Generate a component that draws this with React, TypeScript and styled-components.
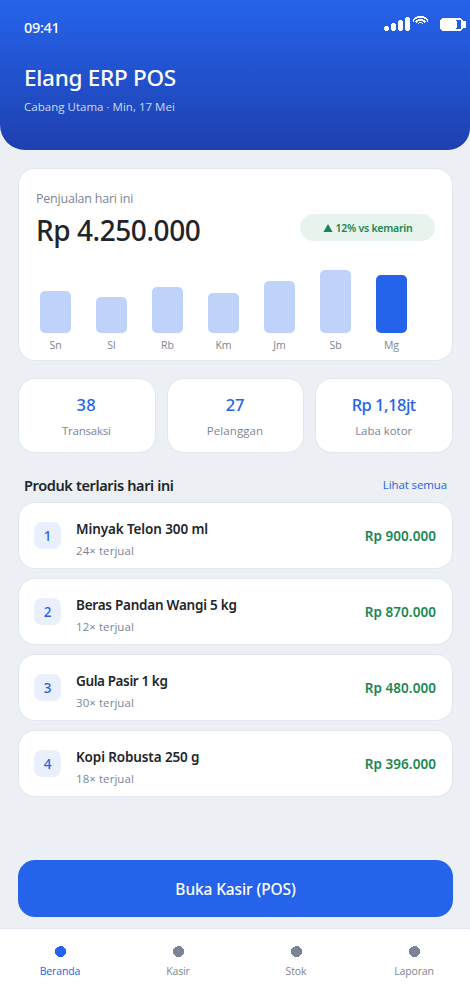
import React from "react";
import styled, { createGlobalStyle } from "styled-components";

const color = {
  page: "#eceff4",
  ink: "#212529",
  muted: "#7c8594",
  blue: "#2563eb",
  blueSoft: "#bfd3fa",
  blueTint: "#eaeffd",
  green: "#198754",
  greenTint: "#e7f4ed",
  line: "#e2e6ee",
};

const GlobalStyle = createGlobalStyle`
  *, *::before, *::after { box-sizing: border-box; }
  body {
    margin: 0;
    background: ${color.page};
    color: ${color.ink};
    font-family: "Noto Sans", "Open Sans", sans-serif;
  }
  h1, h2, p { margin: 0; }
  button { border: 0; padding: 0; font: inherit; cursor: pointer; }
`;

type Tracked = { $track?: number };

const Screen = styled.div`
  display: flex;
  flex-direction: column;
  width: 470px;
  height: 992px;
  overflow: hidden;
  background: ${color.page};
`;

const Header = styled.header`
  flex: none;
  height: 150px;
  padding-top: 17px;
  color: #fff;
  background: linear-gradient(180deg, #2563eb 0%, #1e40af 100%);
  border-radius: 0 0 22px 25px;
`;

const StatusBar = styled.div`
  display: flex;
  justify-content: space-between;
  align-items: flex-start;
  height: 46px;
  padding: 0 4px 0 24px;
`;

const Clock = styled.span`
  font-size: 14.5px;
  font-weight: 500;
  line-height: 20px;
  letter-spacing: -0.35px;
`;

const StatusIcons = styled.svg`
  display: block;
  width: 82px;
  height: 16px;
  margin-top: -1px;
`;

const AppTitle = styled.h1`
  padding-left: 24px;
  font-size: 22.5px;
  font-weight: 500;
  line-height: 30px;
  letter-spacing: -0.27px;
`;

const Branch = styled.p`
  margin-top: 6px;
  padding-left: 24px;
  font-family: "Open Sans", sans-serif;
  font-size: 11.5px;
  line-height: 16px;
  letter-spacing: 0.02px;
  color: #cbdafb;
`;

const Content = styled.main`
  flex: 1;
  display: flex;
  flex-direction: column;
  padding: 18px 17px 11px 18px;
`;

const Card = styled.section`
  background: #fff;
  border: 1px solid ${color.line};
  border-radius: 17px;
`;

const SalesCard = styled(Card)`
  height: 193px;
  padding: 21px 17px 0;
`;

const SalesLabel = styled.p`
  font-family: "Open Sans", sans-serif;
  font-size: 12.5px;
  line-height: 18px;
  letter-spacing: -0.22px;
  color: ${color.muted};
`;

const SalesRow = styled.div`
  display: flex;
  justify-content: space-between;
  align-items: flex-start;
  height: 57px;
  padding-top: 4px;
`;

const SalesTotal = styled.strong`
  font-size: 28px;
  font-weight: 500;
  line-height: 36px;
  letter-spacing: -0.45px;
`;

const Trend = styled.span`
  display: flex;
  align-items: center;
  justify-content: center;
  gap: 3px;
  width: 135px;
  height: 27px;
  margin-top: 2px;
  border-radius: 14px;
  background: ${color.greenTint};
  color: ${color.green};
  font-size: 10.5px;
  font-weight: 600;
  line-height: 16px;
  letter-spacing: -0.25px;
`;

const TrendArrow = styled.svg`
  width: 10px;
  height: 8px;
  fill: currentColor;
`;

const Chart = styled.div`
  display: flex;
  align-items: flex-end;
  gap: 25px;
  height: 87px;
  padding-left: 4px;
`;

const Day = styled.div`
  display: flex;
  flex-direction: column;
  align-items: center;
  width: 31px;
`;

const Bar = styled.div<{ $height: number; $active: boolean }>`
  width: 31px;
  height: ${(p) => p.$height}px;
  border-radius: 5px;
  background: ${(p) => (p.$active ? color.blue : color.blueSoft)};
`;

const DayName = styled.span`
  margin-top: 5px;
  font-family: "Open Sans", sans-serif;
  font-size: 10.5px;
  line-height: 14px;
  color: ${color.muted};
`;

const Stats = styled.div`
  display: grid;
  grid-template-columns: repeat(3, 1fr);
  gap: 11px;
  margin-top: 17px;
`;

const StatCard = styled(Card)`
  display: flex;
  flex-direction: column;
  align-items: center;
  height: 75px;
  padding: 15px 1px 0 0;
`;

const StatValue = styled.strong<Tracked>`
  font-size: 16.5px;
  font-weight: 500;
  line-height: 22px;
  letter-spacing: ${(p) => p.$track ?? 0}px;
  color: ${color.blue};
`;

const StatLabel = styled.span<Tracked>`
  margin-top: 7px;
  font-family: "Open Sans", sans-serif;
  font-size: 11.5px;
  line-height: 16px;
  letter-spacing: ${(p) => p.$track ?? 0}px;
  color: ${color.muted};
`;

const SectionHead = styled.div`
  display: flex;
  justify-content: space-between;
  align-items: flex-start;
  height: 49px;
  padding: 22px 6px 0 6px;
`;

const SectionTitle = styled.h2`
  font-size: 14.5px;
  font-weight: 600;
  line-height: 20px;
  letter-spacing: -0.37px;
`;

const SeeAll = styled.button`
  margin-top: 2px;
  background: none;
  color: ${color.blue};
  font-family: "Open Sans", sans-serif;
  font-size: 11.5px;
  line-height: 16px;
  letter-spacing: -0.12px;
`;

const ProductList = styled.div`
  display: flex;
  flex-direction: column;
  gap: 9px;
`;

const ProductRow = styled(Card)`
  display: flex;
  align-items: center;
  height: 67px;
  padding: 0 16px 0 15px;
`;

const Rank = styled.span`
  display: flex;
  align-items: center;
  justify-content: center;
  width: 27px;
  height: 27px;
  border-radius: 8px;
  background: ${color.blueTint};
  color: ${color.blue};
  font-size: 13.5px;
  font-weight: 500;
  line-height: 18px;
`;

const ProductInfo = styled.div`
  flex: 1;
  display: flex;
  flex-direction: column;
  align-items: flex-start;
  gap: 5px;
  padding: 7px 0 0 15px;
`;

const ProductName = styled.span<Tracked>`
  font-size: 13.5px;
  font-weight: 600;
  line-height: 18px;
  letter-spacing: ${(p) => p.$track ?? 0}px;
`;

const Sold = styled.span`
  font-family: "Open Sans", sans-serif;
  font-size: 11.5px;
  line-height: 16px;
  letter-spacing: 0.06px;
  color: ${color.muted};
`;

const Price = styled.span`
  color: ${color.green};
  font-size: 13.5px;
  font-weight: 600;
  line-height: 18px;
  letter-spacing: 0.06px;
`;

const OpenRegister = styled.button`
  height: 57px;
  margin-top: auto;
  border-radius: 17px;
  background: ${color.blue};
  color: #fff;
  font-size: 15.5px;
  font-weight: 500;
  line-height: 20px;
  letter-spacing: -0.12px;
`;

const TabBar = styled.nav`
  flex: none;
  display: grid;
  grid-template-columns: repeat(4, 118px);
  height: 64px;
  padding-left: 1px;
  background: #fff;
  border-top: 1px solid ${color.line};
`;

const Tab = styled.button<{ $active: boolean }>`
  display: flex;
  flex-direction: column;
  align-items: center;
  padding-top: 17px;
  background: none;
  color: ${(p) => (p.$active ? color.blue : color.muted)};
`;

const TabDot = styled.svg`
  display: block;
  width: 11px;
  height: 11px;
  margin-left: 1px;
  fill: currentColor;
`;

const TabLabel = styled.span`
  margin-top: 7px;
  font-family: "Open Sans", sans-serif;
  font-size: 10.5px;
  line-height: 14px;
  letter-spacing: -0.13px;
`;

const days = [
  { name: "Sn", height: 42 },
  { name: "Sl", height: 36 },
  { name: "Rb", height: 46 },
  { name: "Km", height: 40 },
  { name: "Jm", height: 52 },
  { name: "Sb", height: 63 },
  { name: "Mg", height: 58 },
];

const stats = [
  { value: "38", label: "Transaksi", valueTrack: 0.4, labelTrack: -0.22 },
  { value: "27", label: "Pelanggan", valueTrack: -0.2, labelTrack: 0.1 },
  { value: "Rp 1,18jt", label: "Laba kotor", valueTrack: -0.5, labelTrack: -0.05 },
];

const products = [
  { name: "Minyak Telon 300 ml", sold: 24, price: "Rp 900.000", track: -0.11 },
  { name: "Beras Pandan Wangi 5 kg", sold: 12, price: "Rp 870.000", track: -0.24 },
  { name: "Gula Pasir 1 kg", sold: 30, price: "Rp 480.000", track: -0.39 },
  { name: "Kopi Robusta 250 g", sold: 18, price: "Rp 396.000", track: -0.12 },
];

const tabs = ["Beranda", "Kasir", "Stok", "Laporan"];

function DeviceStatus() {
  return (
    <StatusIcons viewBox="384 16 82 16" fill="#fff" shapeRendering="crispEdges">
      <path d="M385 26h3v1h1v3h-1v1h-3v-1h-1v-3h1z" />
      <path d="M392 23h3v1h1v6h-1v1h-3v-1h-1v-6h1z" />
      <path d="M399 20h3v1h1v9h-1v1h-3v-1h-1v-9h1z" />
      <path d="M406 17h3v1h1v12h-1v1h-3v-1h-1v-12h1z" />
      <path d="M417 16h7v1h2v1h1v1h1v3h-1v-2h-1v-1h-2v-1h-7v1h-2v1h-1v2h-1v-3h1v-1h1v-1h2z" />
      <path d="M418 19h5v1h2v1h1v1h-1v1h-1v-1h-1v-1h-5v1h-1v1h-1v-1h-1v-1h1v-1h2z" />
      <path d="M419 22h3v1h1v1h-1v-1h-3v1h-1v-1h1z" />
      <path
        fillRule="evenodd"
        d="M442 18h19v1h1v1h1v1h3v7h-3v1h-1v1h-1v1h-19v-1h-1v-1h-1v-9h1v-1h1zM456 20v1h1v7h-1v1h5v-9z"
      />
    </StatusIcons>
  );
}

export default function App() {
  return (
    <>
      <GlobalStyle />
      <Screen>
        <Header>
          <StatusBar>
            <Clock>09:41</Clock>
            <DeviceStatus />
          </StatusBar>
          <AppTitle>Elang ERP POS</AppTitle>
          <Branch>Cabang Utama · Min, 17 Mei</Branch>
        </Header>

        <Content>
          <SalesCard>
            <SalesLabel>Penjualan hari ini</SalesLabel>
            <SalesRow>
              <SalesTotal>Rp 4.250.000</SalesTotal>
              <Trend>
                <TrendArrow viewBox="0 0 10 8">
                  <path d="M5 0l4.6 8H.4z" />
                </TrendArrow>
                12% vs kemarin
              </Trend>
            </SalesRow>
            <Chart>
              {days.map((day, i) => (
                <Day key={day.name}>
                  <Bar $height={day.height} $active={i === days.length - 1} />
                  <DayName>{day.name}</DayName>
                </Day>
              ))}
            </Chart>
          </SalesCard>

          <Stats>
            {stats.map((stat) => (
              <StatCard key={stat.label}>
                <StatValue $track={stat.valueTrack}>{stat.value}</StatValue>
                <StatLabel $track={stat.labelTrack}>{stat.label}</StatLabel>
              </StatCard>
            ))}
          </Stats>

          <SectionHead>
            <SectionTitle>Produk terlaris hari ini</SectionTitle>
            <SeeAll>Lihat semua</SeeAll>
          </SectionHead>

          <ProductList>
            {products.map((product, i) => (
              <ProductRow key={product.name}>
                <Rank>{i + 1}</Rank>
                <ProductInfo>
                  <ProductName $track={product.track}>{product.name}</ProductName>
                  <Sold>{product.sold}× terjual</Sold>
                </ProductInfo>
                <Price>{product.price}</Price>
              </ProductRow>
            ))}
          </ProductList>

          <OpenRegister>Buka Kasir (POS)</OpenRegister>
        </Content>

        <TabBar>
          {tabs.map((tab, i) => (
            <Tab key={tab} $active={i === 0}>
              <TabDot viewBox="0 0 11 11" shapeRendering="crispEdges">
                <path d="M4 0h4v1h1v1h1v1h1v5h-1v1h-1v1h-1v1h-5v-1h-1v-1h-1v-1h-1v-5h1v-1h1v-1h2z" />
              </TabDot>
              <TabLabel>{tab}</TabLabel>
            </Tab>
          ))}
        </TabBar>
      </Screen>
    </>
  );
}
